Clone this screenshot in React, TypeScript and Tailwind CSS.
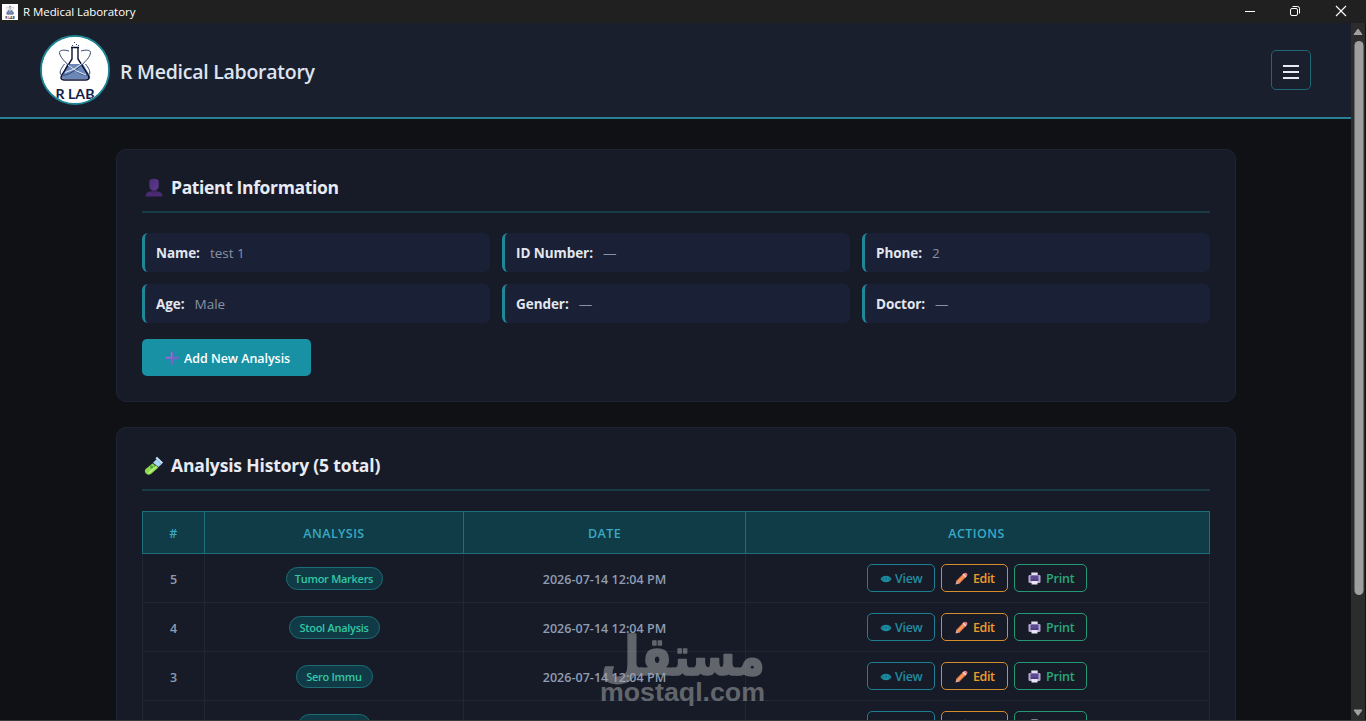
import type { ReactNode } from "react";

function FlaskLogo({ className }: { className: string }) {
  return (
    <svg viewBox="0 0 66 66" className={className}>
      <rect width="66" height="66" fill="#fff" />
      <path d="M25 27h16l7 12q1 3-2 3H22q-3 0-2-3z" fill="#6b87b8" />
      <path
        d="M29 10.500h8M30 10.500v11.500l-10.500 16.500q-1.500 4.500 2.500 4.500h22q4 0 2.500-4.500L36 22v-11.500"
        fill="none"
        stroke="#0b1030"
        strokeWidth="1.400"
      />
      <g fill="none" stroke="#33466f" strokeWidth="1">
        <path d="M27 14c-5-1.500-9.500-1-9.500 1.500 0 4 5.500 10 12.500 15.500 8 6.500 16 9 17.500 6 1.200-2.500-1-6-4-10" />
        <path d="M39 14c5-1.500 9.500-1 9.500 1.500 0 4-5.500 10-12.500 15.500-8 6.500-16 9-17.500 6-1.200-2.500 1-6 4-10" />
      </g>
      <path d="M23 35.500q9-2 17-9M26 28q8 7 18 10" fill="none" stroke="#e8eef8" strokeWidth="1" />
      <g fill="#33466f">
        <rect x="32" y="5" width="1" height="1" />
        <rect x="34" y="7" width="1" height="1" />
        <rect x="30" y="8" width="1" height="1" />
        <rect x="36" y="8" width="1" height="1" />
      </g>
      <text
        x="33"
        y="62"
        textAnchor="middle"
        textLength="39"
        lengthAdjust="spacingAndGlyphs"
        fontFamily="Lato, sans-serif"
        fontWeight="700"
        fontSize="12.500"
        fill="#131c48"
      >
        R LAB
      </text>
    </svg>
  );
}

function PersonIcon() {
  return (
    <svg viewBox="0 0 18 20" className="h-5 w-[18px] shrink-0">
      <defs>
        <linearGradient id="person" x1="0" y1="0" x2="1" y2="1">
          <stop offset="0" stopColor="#4a2d78" />
          <stop offset="1" stopColor="#603a8c" />
        </linearGradient>
      </defs>
      <path d="M.5 18.500c0-3.500 2.500-5 5.500-5h6c3 0 5.500 1.500 5.500 5z" fill="#4a2b73" />
      <path d="M6.500 11h5v3q-2.500 1.500-5 0z" fill="#3d2461" />
      <path d="M4.300 3.500Q4.300.7 9 .7t4.700 2.800v4q0 4.800-4.700 4.800T4.300 7.500z" fill="url(#person)" />
    </svg>
  );
}

function TubeIcon() {
  return (
    <svg viewBox="0 0 20 20" className="-ml-px h-5 w-5 shrink-0">
      <path d="M9 6.700l3.500-3.400 5 5-3 2.800z" fill="#a8d7f5" />
      <path d="M8.500 7.500l6 4L7 18q-2.800 1.700-5-.5T1.700 13z" fill="#8edb52" />
      <path d="M11.500 2.200l1.500-1.400 6 5.800-1.500 1.600z" fill="#c5e2fa" />
      <circle cx="7.500" cy="11" r="1.500" fill="#4da43a" />
      <circle cx="10.500" cy="10.300" r="1" fill="#52a83c" />
      <path d="M4.500 17.300l8-7" stroke="#c7f38c" strokeWidth="1.200" />
    </svg>
  );
}

function PlusIcon() {
  return (
    <svg viewBox="0 0 14 14" className="mt-px h-[14px] w-[14px] shrink-0">
      <path d="M5.800.5h2.400v5.300h5.300v2.400H8.200v5.300H5.800V8.200H.5V5.800h5.300z" fill="#7a62c8" />
      <path d="M6.500 1v5.500H1" fill="none" stroke="#9478d6" strokeWidth=".8" />
    </svg>
  );
}

function EyeIcon() {
  return (
    <svg viewBox="0 0 12 8" className="mt-px h-2 w-3 shrink-0">
      <path d="M.5 4Q2.500.7 6 .7T11.500 4Q9.500 7.300 6 7.300T.5 4z" fill="#1b8da0" />
      <path d="M3 2.800Q2.300 4 3 5.200M9 2.800Q9.700 4 9 5.200" fill="none" stroke="#17687a" strokeWidth=".8" />
      <circle cx="6" cy="3.500" r="1" fill="#146678" />
    </svg>
  );
}

function PencilIcon() {
  return (
    <svg viewBox="0 0 13 13" className="h-[13px] w-[13px] shrink-0">
      <path d="M.5 12.500l1-4L4.500 11.500z" fill="#d8aaa2" />
      <path d="M1.300 8.700L8 2l3 3-6.700 6.700z" fill="#f07d48" />
      <path d="M2.300 9.700L9 3l1 1-6.700 6.700z" fill="#f9a05f" />
      <path d="M7.500 2.500l1.200-1.200 3 3-1.200 1.200z" fill="#f4d8da" />
      <path d="M8.700 1.300q1.500-1.300 3 0t0 3z" fill="#ef7d86" />
    </svg>
  );
}

function PrinterIcon() {
  return (
    <svg viewBox="0 0 13 13" className="h-[13px] w-[13px] shrink-0">
      <rect x="3.300" y=".5" width="6.400" height="4" fill="#e5dff1" />
      <rect x=".5" y="3" width="12" height="8" rx="1.300" fill="#b5abd0" />
      <rect x="2.500" y="3.500" width="8" height="4.500" fill="#5d4a93" />
      <rect x="3.500" y="8.500" width="6" height="4" fill="#e9e3f5" />
      <rect x="2.700" y="7.500" width="7.600" height="1.500" fill="#4b3a7e" />
    </svg>
  );
}

function TitleBar() {
  return (
    <div className="flex h-[23px] shrink-0 items-center bg-[#202020] pl-0.5 text-white">
      <FlaskLogo className="h-4 w-4" />
      <span className="ml-[5px] text-[11.5px] tracking-[-0.06px]">R Medical Laboratory</span>
      <svg viewBox="0 0 110 14" className="mr-[17px] mb-px ml-auto h-[14px] w-[110px]" fill="none" stroke="#fff">
        <path d="M6 7.500h10" />
        <rect x="51.500" y="4.500" width="7" height="7" rx="1.500" />
        <path d="M53.500 2.500h5q2 0 2 2v5" />
        <path d="M97 2l10 10M107 2l-10 10" strokeWidth="1.100" />
      </svg>
    </div>
  );
}

function Header() {
  return (
    <header className="flex h-24 items-center border-b-2 border-[#2a8094] bg-[#1a1f2e] pr-10 pl-10">
      <div className="h-[70px] w-[70px] overflow-hidden rounded-full border-2 border-[#1f8593] bg-white">
        <FlaskLogo className="h-full w-full" />
      </div>
      <h1 className="ml-2.5 pt-1 text-[19.5px] font-semibold tracking-[-0.26px] text-[#dfe4ee]">R Medical Laboratory</h1>
      <button className="ml-auto flex h-10 w-10 items-center justify-center rounded-[5px] border border-[#1d6874]">
        <svg viewBox="0 0 16 16" className="mt-[3px] h-4 w-4" stroke="#e4e9f2" strokeWidth="2">
          <path d="M0 2h16M0 8h16M0 14h16" />
        </svg>
      </button>
    </header>
  );
}

function Card({ icon, title, titleClass, children }: { icon: ReactNode; title: string; titleClass: string; children: ReactNode }) {
  return (
    <section className="rounded-[10px] border border-[#1d2534] bg-[#171b27] p-[25px] pt-[23px]">
      <h2 className="flex h-10 items-center border-b-2 border-[#183b44] pb-[9px] pl-[3px] text-[#e8ebf4]">
        <span className="flex w-[26px]">{icon}</span>
        <span className={titleClass}>{title}</span>
      </h2>
      {children}
    </section>
  );
}

const info = [
  ["Name:", "test 1"],
  ["ID Number:", "—"],
  ["Phone:", "2"],
  ["Age:", "Male"],
  ["Gender:", "—"],
  ["Doctor:", "—"],
];

const rows = [
  { id: "5", name: "Tumor Markers", date: "2026-07-14 12:04 PM", pill: "w-[97px]" },
  { id: "4", name: "Stool Analysis", date: "2026-07-14 12:04 PM", pill: "w-[91px]" },
  { id: "3", name: "Sero Immu", date: "2026-07-14 12:04 PM", pill: "w-[77px]" },
  { id: "", name: "", date: "", pill: "w-[73px]" },
];

const columns = "grid grid-cols-[62px_259px_282px_465px]";
const cell = "flex items-center justify-center border-l";

function Action({ icon, label, className }: { icon: ReactNode; label: string; className: string }) {
  return (
    <button className={`flex h-7 items-center rounded-[5px] border text-[12.5px] font-semibold ${className}`}>
      {icon}
      {label && <span className="pt-0.5">{label}</span>}
    </button>
  );
}

function HistoryTable() {
  return (
    <div className="mt-5">
      <div className={`${columns} h-[43px] border-y border-[#1b6f7b] bg-[#0f3c46] text-[12.5px] font-semibold tracking-[0.4px] text-[#3aa9c3]`}>
        {["#", "ANALYSIS", "DATE", "ACTIONS"].map((h) => (
          <div key={h} className={`${cell} border-[#1b6f7b] pt-1 last:border-r last:pr-0.5`}>
            {h}
          </div>
        ))}
      </div>
      {rows.map((r) => (
        <div key={r.id} className={`${columns} h-[49px] border-b border-[#1f2634] text-[12.5px] font-semibold text-[#8f9db3]`}>
          <div className={`${cell} border-[#1f2634] pt-[5px]`}>{r.id}</div>
          <div className={`${cell} border-[#1f2634]`}>
            <span
              className={`flex h-[23px] items-center justify-center rounded-full border border-[#1c6d76] bg-[#103a45] pt-0.5 text-[11px] tracking-[-0.28px] text-[#33c7a5] ${r.pill}`}
            >
              {r.name}
            </span>
          </div>
          <div className={`${cell} border-[#1f2634] pt-[5px] tracking-[0.03px]`}>{r.date}</div>
          <div className={`${cell} gap-1.5 border-r border-[#1f2634] pr-px`}>
            <Action icon={<EyeIcon />} label={r.id && "View"} className="w-[68px] gap-[3px] border-[#1f7f92] pl-[12px] tracking-[-0.3px] text-[#218ca2]" />
            <Action icon={<PencilIcon />} label={r.id && "Edit"} className="w-[67px] gap-[5px] border-[#d58c2c] pl-[13px] tracking-[-0.4px] text-[#ee9b2b]" />
            <Action icon={<PrinterIcon />} label={r.id && "Print"} className="w-[73px] gap-[5px] border-[#239a75] pl-[13px] tracking-[-0.2px] text-[#27a87d]" />
          </div>
        </div>
      ))}
    </div>
  );
}

function Scrollbar() {
  return (
    <div className="flex w-[15px] shrink-0 flex-col items-center border-r border-[#111] bg-[#2c2c2c]">
      <svg viewBox="0 0 14 18" className="h-[18px] w-[14px]">
        <path d="M7 6l4 5.500H3z" fill="#a0a0a0" stroke="#a0a0a0" strokeLinejoin="round" />
      </svg>
      <div className="h-[554px] w-[9px] translate-x-[0.5px] rounded-full bg-[#9f9f9f]" />
      <svg viewBox="0 0 14 18" className="mt-auto h-[18px] w-[14px]">
        <path d="M7 13.500l4-5.500H3z" fill="#a0a0a0" stroke="#a0a0a0" strokeLinejoin="round" />
      </svg>
    </div>
  );
}

function Watermark() {
  return (
    <svg viewBox="0 0 170 90" className="pointer-events-none absolute top-[626px] left-[598px] h-[90px] w-[170px]" fill="#a0a2a6" opacity="0.55">
      <text
        x="85"
        y="49"
        textAnchor="middle"
        direction="rtl"
        fontFamily="DejaVu Sans, sans-serif"
        fontWeight="700"
        fontSize="54"
        textLength="164"
        lengthAdjust="spacingAndGlyphs"
        stroke="#a0a2a6"
        strokeWidth="1.500"
        strokeLinejoin="round"
      >
        مستقل
      </text>
      <text x="84.500" y="75" textAnchor="middle" fontFamily="Liberation Sans, sans-serif" fontWeight="700" fontSize="26" textLength="165" lengthAdjust="spacingAndGlyphs">
        mostaql.com
      </text>
    </svg>
  );
}

export default function App() {
  return (
    <div className="relative flex h-[721px] w-[1366px] flex-col overflow-hidden border-b border-[#3a3a3c] bg-[#101115] font-['Open_Sans','Noto_Sans',sans-serif]">
      <TitleBar />
      <div className="flex min-h-0 flex-1">
        <div className="w-[1351px] overflow-hidden">
          <Header />
          <main className="mt-[30px] ml-[116px] flex w-[1120px] flex-col gap-[25px]">
            <Card icon={<PersonIcon />} title="Patient Information" titleClass="text-[17.5px] font-bold tracking-[-0.36px]">
              <div className="mt-5 grid grid-cols-3 gap-3">
                {info.map(([k, v]) => (
                  <div key={k} className="flex h-[39px] items-center gap-2.5 rounded-md border-l-3 border-[#1f8798] bg-[#1a2035] pt-0.5 pl-[11px] text-[13.5px]">
                    <span className="font-bold tracking-[-0.06px] text-[#e3e7f0]">{k}</span>
                    <span className="text-[#8792a6]">{v}</span>
                  </div>
                ))}
              </div>
              <button className="mt-4 flex h-[37px] w-[169px] items-center gap-[5px] rounded-[5px] bg-[#1891a5] pl-[23px] text-[12.5px] font-semibold tracking-[-0.04px] text-white">
                <PlusIcon />
                <span className="pt-1 whitespace-nowrap">Add New Analysis</span>
              </button>
            </Card>
            <Card icon={<TubeIcon />} title="Analysis History (5 total)" titleClass="text-[17.5px] font-bold tracking-[-0.16px]">
              <HistoryTable />
            </Card>
          </main>
        </div>
        <Scrollbar />
      </div>
      <Watermark />
    </div>
  );
}
